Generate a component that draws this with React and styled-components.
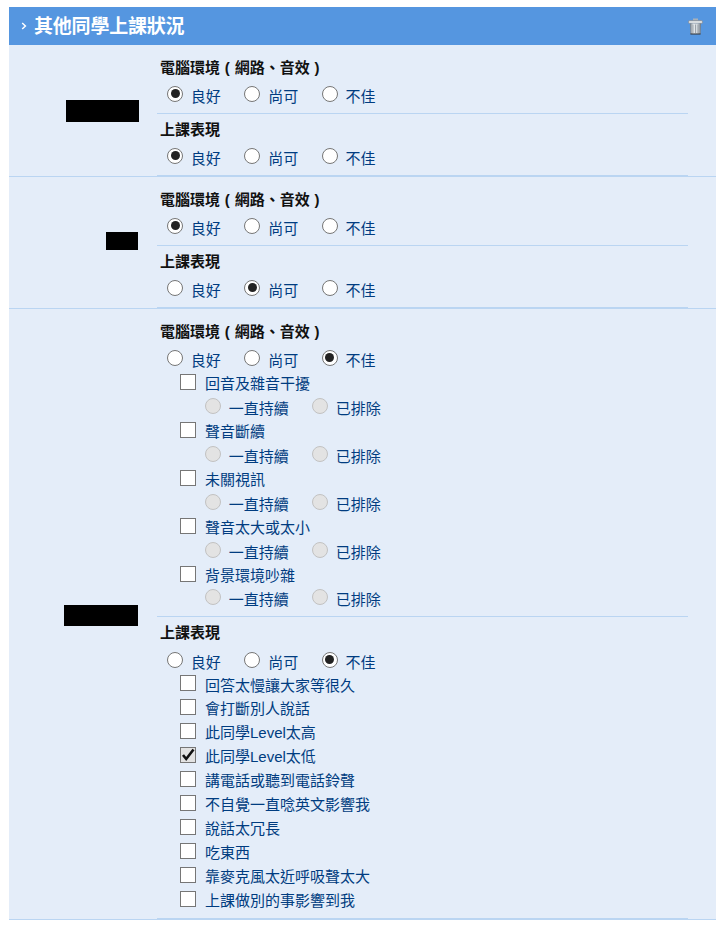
import styled, { createGlobalStyle } from "styled-components"

const GlobalStyle = createGlobalStyle`
  html, body {
    margin: 0;
    padding: 0;
    background: #fff;
    font-family: "Liberation Sans", "Noto Sans CJK TC", sans-serif;
  }
`

const Panel = styled.div`
  width: 707px;
  margin: 7px 0 0 9px;
  background: #e4edf9;
`

const Header = styled.div`
  height: 38px;
  display: flex;
  align-items: center;
  background: #5596e0;
  padding: 0 13px 0 12px;
`

const HeaderTitle = styled.h2`
  flex: 1;
  margin: 2px 0 0 7px;
  font-size: 19px;
  line-height: 36px;
  letter-spacing: -0.2px;
  font-weight: 700;
  color: #fff;
`

const Row = styled.div`
  display: flex;
  border-bottom: 1px solid #bad5f2;
`

const NameCell = styled.div`
  width: 148px;
  flex: none;
  display: flex;
  align-items: center;
  justify-content: flex-end;
  padding-right: ${(p) => p.$right}px;
  box-sizing: border-box;
`

const Redacted = styled.div`
  background: #000;
  width: ${(p) => p.$w}px;
  height: ${(p) => p.$h}px;
  margin-top: ${(p) => p.$shift}px;
`

const Content = styled.div`
  width: 531px;
`

const Section = styled.div`
  padding: ${(p) => (p.$first ? 12 : 5)}px 0 6px;
  border-bottom: 1px solid #bad5f2;
`

const SectionTitle = styled.div`
  height: 22px;
  line-height: 22px;
  margin: 0 0 ${(p) => p.$gap}px 3px;
  font-size: 15px;
  font-weight: 700;
  word-spacing: 0.7px;
  color: #111;
`

const Options = styled.div`
  height: ${(p) => p.$h || 24}px;
  display: flex;
  padding-left: ${(p) => p.$indent}px;
`

const Option = styled.label`
  width: ${(p) => p.$w}px;
  flex: none;
  display: flex;
  align-items: center;
  gap: 7.8px;
  font-size: 15px;
  color: #003c80;
`

const Radio = styled.span`
  width: 16px;
  height: 16px;
  flex: none;
  box-sizing: border-box;
  margin-bottom: 3px;
  border-radius: 50%;
  border: 1.5px solid ${(p) => (p.$disabled ? "#c2c2c2" : "#767676")};
  background: ${(p) => (p.$disabled ? "#e3e3e3" : "#fff")};
  display: flex;
  align-items: center;
  justify-content: center;

  &::after {
    content: "";
    display: ${(p) => (p.$checked ? "block" : "none")};
    width: 9px;
    height: 9px;
    border-radius: 50%;
    background: #222;
  }
`

const CheckRow = styled.label`
  height: ${(p) => p.$h}px;
  display: flex;
  align-items: center;
  gap: 9px;
  padding: 0 0 1px 23px;
  box-sizing: border-box;
  font-size: 15px;
  color: #003c80;
`

const Box = styled.span`
  width: 16px;
  height: 16px;
  flex: none;
  box-sizing: border-box;
  margin-bottom: 2px;
  border: 1.5px solid #767676;
  background: ${(p) => (p.$checked ? "#e3e3e3" : "#fff")};
  display: flex;
  align-items: center;
  justify-content: center;
`

const LEVELS = ["良好", "尚可", "不佳"]
const ENV_TITLE = "電腦環境 ( 網路、音效 )"
const SHOW_TITLE = "上課表現"
const ENV_ISSUES = ["回音及雜音干擾", "聲音斷續", "未關視訊", "聲音太大或太小", "背景環境吵雜"]
const SHOW_ISSUES = [
  "回答太慢讓大家等很久",
  "會打斷別人說話",
  "此同學Level太高",
  "此同學Level太低",
  "講電話或聽到電話鈴聲",
  "不自覺一直唸英文影響我",
  "說話太冗長",
  "吃東西",
  "靠麥克風太近呼吸聲太大",
  "上課做別的事影響到我",
]

function ChevronIcon() {
  return (
    <svg width="6" height="8" viewBox="0 0 6 8">
      <path d="M1.2 1 L4.4 4 L1.2 7" fill="none" stroke="#fff" strokeWidth="1.5" />
    </svg>
  )
}

function TrashIcon() {
  return (
    <svg width="15" height="17" viewBox="0 0 15 17">
      <defs>
        <linearGradient id="can" x1="0" y1="0" x2="1" y2="0">
          <stop offset="0" stopColor="#6d7680" />
          <stop offset="0.3" stopColor="#e8ecef" />
          <stop offset="0.7" stopColor="#cfd5da" />
          <stop offset="1" stopColor="#69727c" />
        </linearGradient>
      </defs>
      <rect x="5" y="0.5" width="5" height="2.5" fill="#a9b1b9" />
      <rect x="0.5" y="2.5" width="14" height="3" rx="1.2" fill="#d8dcdf" stroke="#7f8790" strokeWidth="0.7" />
      <path d="M2 5.5 H13 L12.6 16 H2.4 Z" fill="url(#can)" />
      <path d="M5 6.5 V15 M7.5 6.5 V15 M10 6.5 V15" stroke="#8b939b" strokeWidth="0.8" />
      <path d="M2.4 16 H12.6" stroke="#3c4249" strokeWidth="1.2" />
    </svg>
  )
}

function CheckIcon() {
  return (
    <svg width="14" height="14" viewBox="0 0 14 14">
      <path d="M2 7 L5.2 11 L12.5 1.5" fill="none" stroke="#111" strokeWidth="2.6" />
    </svg>
  )
}

function Levels({ selected }) {
  return (
    <Options $indent={10}>
      {LEVELS.map((text, i) => (
        <Option key={text} $w={77.4}>
          <Radio $checked={i === selected} />
          {text}
        </Option>
      ))}
    </Options>
  )
}

function CheckItem({ text, checked, height = 24 }) {
  return (
    <CheckRow $h={height}>
      <Box $checked={checked}>{checked && <CheckIcon />}</Box>
      {text}
    </CheckRow>
  )
}

function EnvIssue({ text, last }) {
  return (
    <>
      <CheckItem text={text} />
      <Options $indent={48} $h={last ? 23 : 24}>
        <Option $w={107}>
          <Radio $disabled />
          一直持續
        </Option>
        <Option $w={107}>
          <Radio $disabled />
          已排除
        </Option>
      </Options>
    </>
  )
}

function Classmate({ box, right, env, show, children }) {
  return (
    <Row>
      <NameCell $right={right}>
        <Redacted $w={box.w} $h={box.h} $shift={box.shift} />
      </NameCell>
      <Content>
        <Section $first>
          <SectionTitle $gap={4}>{ENV_TITLE}</SectionTitle>
          <Levels selected={env} />
          {children && children[0]}
        </Section>
        <Section>
          <SectionTitle $gap={children ? 5 : 4}>{SHOW_TITLE}</SectionTitle>
          <Levels selected={show} />
          {children && children[1]}
        </Section>
      </Content>
    </Row>
  )
}

export default function App() {
  return (
    <>
      <GlobalStyle />
      <Panel>
        <Header>
          <ChevronIcon />
          <HeaderTitle>其他同學上課狀況</HeaderTitle>
          <TrashIcon />
        </Header>
        <Classmate box={{ w: 73, h: 22, shift: 0 }} right={18} env={0} show={0} />
        <Classmate box={{ w: 32, h: 18, shift: -4 }} right={19} env={0} show={1} />
        <Classmate box={{ w: 74, h: 21, shift: 2 }} right={19} env={2} show={2}>
          {[
            ENV_ISSUES.map((text, i) => (
              <EnvIssue key={text} text={text} last={i === ENV_ISSUES.length - 1} />
            )),
            SHOW_ISSUES.map((text, i) => (
              <CheckItem
                key={text}
                text={text}
                checked={text === "此同學Level太低"}
                height={i === 0 ? 23 : 24}
              />
            )),
          ]}
        </Classmate>
      </Panel>
    </>
  )
}
